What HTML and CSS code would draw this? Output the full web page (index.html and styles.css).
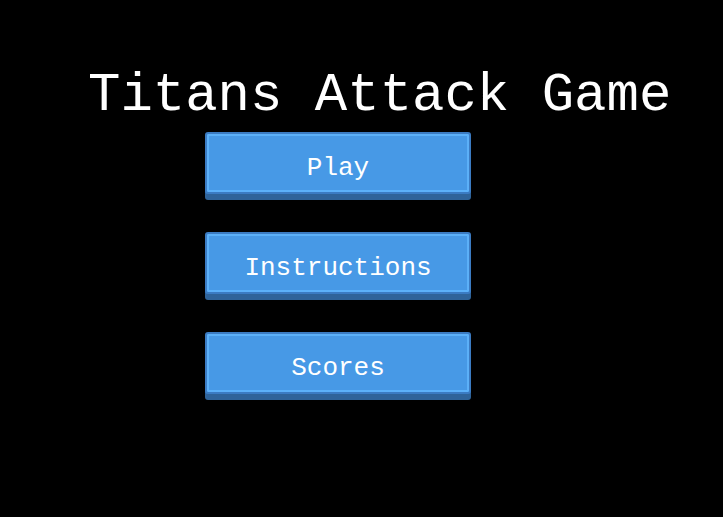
FILE: index.html
```html
<!DOCTYPE html>
<html>
<head>
<meta charset="utf-8">
<title>Titans Attack Game</title>
<link rel="stylesheet" href="styles.css">
</head>
<body>
<main class="menu">
  <h1 class="title">Titans Attack Game</h1>
  <nav class="buttons">
    <button class="btn">Play</button>
    <button class="btn">Instructions</button>
    <button class="btn">Scores</button>
  </nav>
</main>
</body>
</html>
```
FILE: styles.css
```css
html, body {
  margin: 0;
  padding: 0;
  background: #000;
  height: 100%;
}
body {
  font-family: "Liberation Mono", "DejaVu Sans Mono", monospace;
  color: #fff;
}
.menu {
  display: flex;
  flex-direction: column;
  padding-top: 65px;
}
.title {
  margin: 0;
  padding-left: 88px;
  font-size: 54px;
  font-weight: normal;
  line-height: 62px;
  white-space: nowrap;
}
.buttons {
  display: flex;
  flex-direction: column;
  gap: 38px;
  padding-left: 205px;
  margin-top: 5px;
}
.btn {
  box-sizing: border-box;
  width: 266px;
  height: 62px;
  padding: 19px 0 9px;
  margin: 0;
  border: 2px solid #3b7bc2;
  border-radius: 3px;
  background: #4799e6;
  box-shadow: inset 0 0 0 2px #5cb0f8, 0 6px 0 #2f6399;
  color: #fff;
  font-family: "Liberation Mono", "DejaVu Sans Mono", monospace;
  font-size: 26px;
  line-height: 30px;
  text-align: center;
  align-self: flex-start;
}
```
